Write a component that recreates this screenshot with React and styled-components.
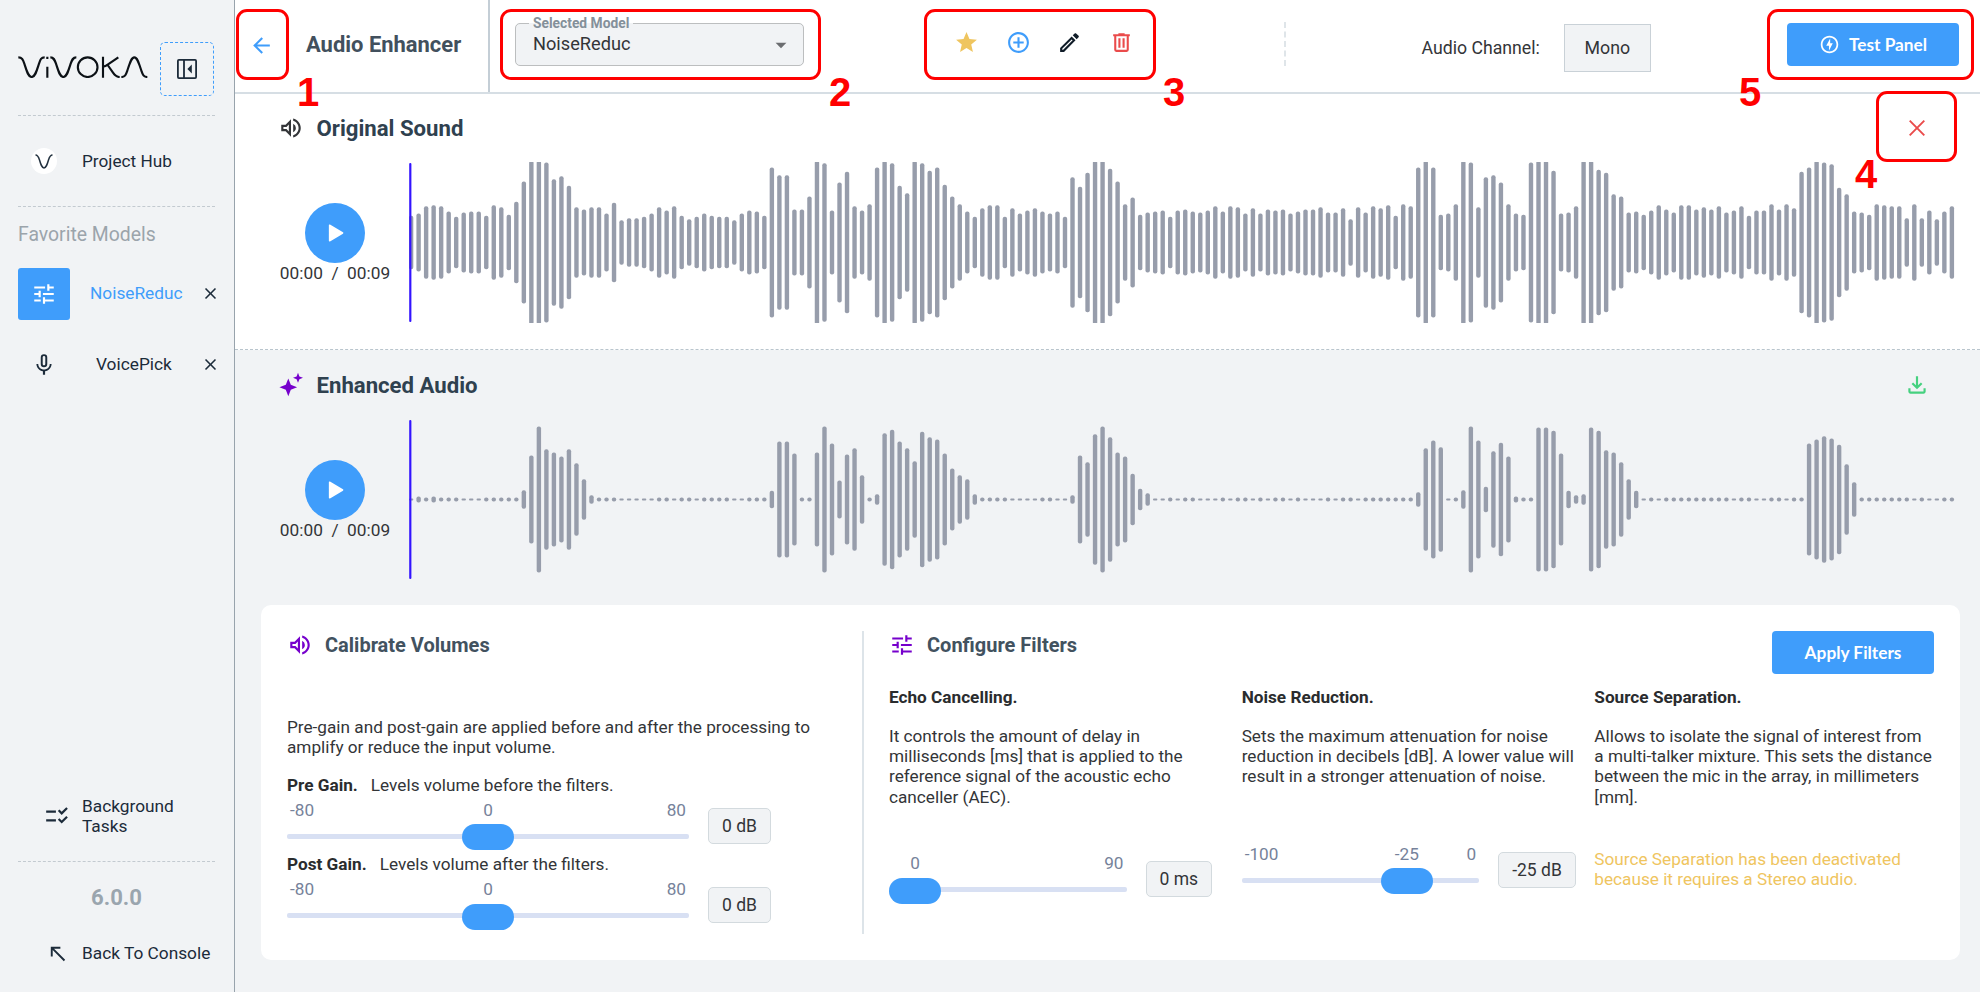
import React from "react";
import styled, { createGlobalStyle } from "styled-components";
import {
  MdAddCircleOutline,
  MdArrowBack,
  MdArrowDropDown,
  MdChecklistRtl,
  MdClose,
  MdNorthWest,
  MdOutlineEdit,
  MdOutlineFileDownload,
  MdOutlineOfflineBolt,
  MdOutlineVolumeUp,
  MdStar,
  MdTune,
} from "react-icons/md";

const palette = {
  blue: "#3f9dfb",
  grey: "#f1f3f5",
  line: "#d6dee4",
  dark: "#1c2b3a",
  title: "#374957",
  text: "#333538",
  muted: "#9aa5ae",
  label: "#76829a",
  purple: "#7600cc",
  wave: "#979dab",
  cursor: "#3414ff",
  yellow: "#efc55f",
  red: "#ea4b4b",
  green: "#45d17f",
  callout: "#ff0000",
};

const GlobalStyle = createGlobalStyle`
  * {
    box-sizing: border-box;
  }
  body {
    margin: 0;
    font-family: Roboto, "Liberation Sans", sans-serif;
    font-size: 17.19px;
    line-height: 20.3px;
    color: ${palette.text};
    background: ${palette.grey};
  }
  svg {
    display: block;
    flex-shrink: 0;
  }
`;

const Page = styled.div`
  position: relative;
  display: flex;
  width: 1980px;
  height: 992px;
  overflow: hidden;
`;

/* sidebar */

const Sidebar = styled.aside`
  display: flex;
  flex-direction: column;
  flex-shrink: 0;
  width: 235px;
  padding: 42px 19px 26px 18px;
  border-right: 1px solid #98a3ac;
  background: ${palette.grey};
  color: ${palette.dark};
`;

const LogoRow = styled.div`
  display: flex;
  align-items: center;
  justify-content: space-between;
  height: 54px;
  margin-bottom: 19px;

  > svg {
    margin-top: -5px;
  }
`;

const ToggleButton = styled.div`
  display: flex;
  align-items: center;
  justify-content: center;
  width: 54px;
  height: 54px;
  margin-right: 1px;
  border: 1px dashed ${palette.blue};
  border-radius: 5px;
`;

const Divider = styled.div`
  border-top: 1px dashed #c3cad0;
`;

const NavItem = styled.div`
  display: flex;
  align-items: center;
  height: ${(props) => props.$height}px;
  margin-bottom: ${(props) => props.$bottom || 0}px;
  padding-left: ${(props) => props.$indent}px;
  gap: ${(props) => props.$gap}px;
`;

const HubBadge = styled.div`
  display: flex;
  align-items: center;
  justify-content: center;
  width: 26px;
  height: 26px;
  border-radius: 50%;
  background: #fff;
`;

const FavoriteTitle = styled.div`
  margin: 16px 0 21.5px;
  font-size: 19.4px;
  line-height: 23px;
  color: #9ba4ab;
`;

const FavoriteRow = styled.div`
  display: flex;
  align-items: center;
  height: 52px;
  margin-bottom: 19px;
`;

const FavoriteIcon = styled.div`
  display: flex;
  align-items: center;
  justify-content: center;
  width: 52px;
  height: 52px;
  border-radius: 3px;
  color: ${(props) => (props.$active ? "#fff" : palette.dark)};
  background: ${(props) => (props.$active ? palette.blue : "transparent")};
`;

const FavoriteName = styled.div`
  flex: 1;
  padding-left: ${(props) => (props.$active ? 20 : 26)}px;
  font-size: 17.3px;
  color: ${(props) => (props.$active ? palette.blue : palette.dark)};
`;

const FavoriteClose = styled.div`
  margin-right: -5px;
`;

const SidebarBottom = styled.div`
  margin-top: auto;
  font-size: 17.3px;
`;

const Version = styled.div`
  margin: 22px 0 30px;
  font-size: 22.1px;
  font-weight: 700;
  line-height: 26px;
  text-align: center;
  color: ${palette.muted};
`;

/* header */

const Main = styled.main`
  display: flex;
  flex-direction: column;
  flex: 1;
  min-width: 0;
`;

const Header = styled.header`
  display: flex;
  height: 94px;
  border-bottom: 2px solid ${palette.line};
  background: #fff;
`;

const TitleBlock = styled.div`
  display: flex;
  align-items: center;
  width: 255px;
  padding: 0 0 2px 13.5px;
  border-right: 2px solid #c4ced6;
  color: ${palette.blue};
`;

const PageTitle = styled.h1`
  margin: 0 0 0 32.5px;
  font-size: 21.95px;
  font-weight: 700;
  line-height: 26px;
  color: #42505d;
`;

const ModelSelect = styled.fieldset`
  display: flex;
  align-items: center;
  justify-content: space-between;
  width: 289px;
  height: 50px;
  margin: 16px 0 0 25px;
  padding: 0 9px 6px 17px;
  border: 1px solid #bcbebf;
  border-radius: 5px;
  background: ${palette.grey};
  font-size: 18.2px;

  > svg {
    color: #6b6d70;
  }
`;

const ModelLegend = styled.legend`
  margin-left: -4px;
  padding: 0 4px;
  font-size: 13.8px;
  font-weight: 700;
  line-height: 14px;
  color: #84909a;
`;

const ActionBar = styled.div`
  display: flex;
  gap: 26.5px;
  margin: 29.5px 0 0 150px;
`;

const HeaderSeparator = styled.div`
  height: 44px;
  margin: 22px 0 0 150px;
  border-left: 2px dashed #dfe5e9;
`;

const ChannelLabel = styled.div`
  margin: 37.5px 0 0 136px;
  font-size: 17.7px;
`;

const ChannelValue = styled.div`
  width: 87px;
  height: 48px;
  margin: 24px 0 0 24px;
  border: 1px solid #c9d1d7;
  background: ${palette.grey};
  font-size: 17.8px;
  line-height: 46px;
  text-align: center;
`;

const Button = styled.button`
  display: flex;
  align-items: center;
  justify-content: center;
  gap: 9px;
  width: ${(props) => props.$width}px;
  height: 43px;
  padding: 0;
  border: 0;
  border-radius: 4px;
  background: ${palette.blue};
  font-family: Lato, sans-serif;
  font-size: 17.3px;
  font-weight: 700;
  color: #fff;
`;

const TestPanelSlot = styled.div`
  margin: 22.5px 21px 0 auto;
`;

/* audio sections */

const AudioSection = styled.section`
  display: flex;
  flex-direction: column;
  height: ${(props) => (props.$enhanced ? 230 : 256)}px;
  padding-top: ${(props) => (props.$enhanced ? 21.5 : 20.5)}px;
  border-bottom: ${(props) => (props.$enhanced ? "0" : "1px dashed #b9c5cd")};
  background: ${(props) => (props.$enhanced ? palette.grey : "#fff")};
`;

const SectionHead = styled.div`
  display: flex;
  align-items: center;
  height: 26px;
  margin-bottom: 21.5px;
  padding: 0 50.5px 0 43px;
`;

const SectionTitle = styled.h2`
  flex: 1;
  margin: 0 0 0 12.5px;
  font-size: 22.17px;
  font-weight: 700;
  line-height: 26px;
  color: #2f414f;
`;

const SectionBody = styled.div`
  display: flex;
`;

const Player = styled.div`
  display: flex;
  flex-direction: column;
  align-items: center;
  width: 174px;
  padding: 41px 0 0 26px;
`;

const PlayButton = styled.div`
  display: flex;
  align-items: center;
  justify-content: center;
  width: 60px;
  height: 60px;
  border-radius: 50%;
  background: ${palette.blue};
`;

const Time = styled.div`
  font-size: 17.3px;
  white-space: pre;
`;

/* settings card */

const Card = styled.section`
  display: flex;
  height: 355px;
  margin: 25px 20px 0 26px;
  padding: 26px 0;
  border-radius: 10px;
  background: #fff;
`;

const VolumePanel = styled.div`
  width: 603px;
  padding: 0 26px;
  border-right: 2px solid #dde4e9;
`;

const FilterPanel = styled.div`
  flex: 1;
  padding: 0 26px 0 25px;
`;

const PanelHead = styled.div`
  display: flex;
  align-items: flex-start;
  justify-content: space-between;
  height: 43px;
`;

const PanelTitle = styled.h3`
  display: flex;
  align-items: center;
  gap: 12px;
  height: 28px;
  margin: 0;
  font-size: 20px;
  font-weight: 700;
  color: #42525f;

  > svg {
    color: ${palette.purple};
  }
`;

const VolumeText = styled.p`
  margin: 42.7px 0 17.5px;
`;

const GainLabel = styled.div`
  display: flex;
  gap: 13px;
  margin-bottom: 4.7px;
`;

const Strong = styled.strong`
  font-weight: 700;
  color: #2a2c2e;
`;

const Gain = styled.div`
  height: 79.6px;
`;

const SliderRow = styled.div`
  display: flex;
  align-items: flex-start;
  gap: 19px;
  margin-top: ${(props) => props.$top || 0}px;
`;

const SliderBox = styled.div`
  width: ${(props) => props.$width}px;
`;

const Marks = styled.div`
  position: relative;
  display: flex;
  justify-content: space-between;
  height: 20px;
  margin-bottom: 4.5px;
  padding: 0 3px;
  color: ${palette.label};
`;

const CurrentMark = styled.span`
  position: absolute;
  transform: translateX(-50%);
`;

const Track = styled.div`
  position: relative;
  display: flex;
  align-items: center;
  height: 26px;

  &::before {
    content: "";
    width: 100%;
    height: 5px;
    margin-bottom: 2px;
    border-radius: 2px;
    background: #d8e0f3;
  }
`;

const Thumb = styled.div`
  position: absolute;
  width: 52px;
  height: 26px;
  border-radius: 13px;
  background: ${palette.blue};
  transform: translateX(-50%);
`;

const ValueBox = styled.div`
  height: 36px;
  margin-top: 8px;
  padding: 0 13px;
  border: 1px solid #d3dade;
  border-radius: 5px;
  background: ${palette.grey};
  font-size: 17.5px;
  line-height: 34px;
  white-space: nowrap;
`;

const Filters = styled.div`
  display: grid;
  grid-template-columns: repeat(3, 1fr);
  gap: 13px;
  margin-top: 13px;
`;

const FilterText = styled.p`
  min-height: 81.2px;
  margin: 18.4px 0 0;
`;

const Warning = styled.p`
  margin: 42px 0 0;
  color: ${palette.yellow};
`;

/* numbered callouts */

const CalloutFrame = styled.div`
  position: absolute;
  left: ${(props) => props.$x}px;
  top: ${(props) => props.$y}px;
  width: ${(props) => props.$w}px;
  height: 71px;
  border: 3px solid ${palette.callout};
  border-radius: 11px;
`;

const CalloutNumber = styled.div`
  position: absolute;
  left: ${(props) => props.$x}px;
  top: ${(props) => props.$y}px;
  font: 700 40px/40px "Liberation Sans", Arial, sans-serif;
  color: ${palette.callout};
`;

const callouts = [
  { n: 1, x: 236, y: 9, w: 53, nx: 297, ny: 72 },
  { n: 2, x: 500, y: 9, w: 321, nx: 829, ny: 72 },
  { n: 3, x: 924, y: 9, w: 232, nx: 1163, ny: 72 },
  { n: 4, x: 1876, y: 91, w: 81, nx: 1855, ny: 154 },
  { n: 5, x: 1767, y: 9, w: 207, nx: 1739, ny: 72 },
];

const FULL = 245;

const originalPeaks = [
  80, 87, 109, 112, 109, 93, 77, 90, 93, 93, 80, 112, 106, 83, 122, 183, FULL, FULL, 240, 190,
  199, 170, 106, 99, 106, 106, 87, 119, 67, 73, 73, 77, 87, 106, 96, 109, 80, 70, 77, 87,
  80, 77, 77, 67, 87, 96, 93, 80, 225, 202, 202, 99, 99, 138, FULL, 238, 96, 180, 212, 109,
  96, 115, 225, FULL, 238, 170, 148, FULL, 238, 215, 225, 173, 138, 115, 93, 77, 103, 112, 112, 77,
  103, 87, 96, 103, 93, 87, 93, 77, 196, 167, 209, FULL, FULL, 221, 183, 115, 135, 83, 90, 93,
  96, 77, 96, 99, 93, 90, 96, 109, 93, 109, 106, 87, 103, 87, 99, 96, 99, 87, 93, 99,
  99, 106, 90, 90, 103, 70, 106, 90, 109, 103, 112, 80, 115, 109, 225, FULL, 225, 83, 87, 115,
  FULL, 240, 106, 196, 202, 180, 115, 87, 83, 240, FULL, FULL, 215, 87, 90, 109, FULL, FULL, 218, 209,
  145, 138, 90, 93, 83, 96, 112, 99, 90, 112, 112, 99, 106, 99, 109, 90, 96, 109, 80, 96,
  96, 115, 99, 115, 103, 212, 225, FULL, 240, 235, 164, 145, 93, 90, 83, 115, 112, 109, 109, 73,
  115, 73, 96, 70, 93, 109,
];

const enhancedPeaks = [
  3, 9, 6, 9, 6, 6, 6, 3, 3, 3, 6, 6, 6, 6, 6, 28, 132, 219, 151, 141,
  129, 151, 109, 61, 13, 6, 6, 6, 3, 3, 3, 3, 3, 6, 6, 3, 6, 6, 3, 6,
  6, 6, 6, 3, 3, 6, 6, 6, 26, 174, 174, 138, 6, 6, 141, 219, 168, 57, 135, 154,
  73, 6, 16, 199, 209, 174, 154, 115, 203, 187, 180, 138, 93, 73, 61, 16, 6, 6, 6, 6,
  3, 3, 3, 3, 6, 6, 3, 3, 13, 132, 112, 196, 219, 187, 141, 129, 77, 32, 19, 3,
  3, 6, 3, 6, 6, 3, 3, 3, 6, 3, 6, 6, 3, 6, 3, 6, 6, 3, 6, 3,
  3, 3, 6, 3, 6, 6, 3, 6, 6, 6, 6, 6, 6, 6, 22, 154, 177, 157, 3, 6,
  28, 219, 177, 38, 145, 170, 129, 9, 6, 6, 216, 216, 206, 138, 26, 13, 16, 216, 206, 148,
  141, 112, 61, 26, 3, 6, 3, 6, 6, 6, 6, 6, 6, 6, 6, 6, 3, 6, 6, 3,
  3, 6, 6, 3, 6, 6, 168, 180, 190, 183, 164, 106, 52, 6, 6, 6, 6, 6, 6, 6,
  3, 6, 3, 3, 6, 6,
];

const BAR_STEP = 7.516;
const BAR_WIDTH = 4.4;

const Waveform = ({ peaks }) => (
  <svg width="1550" height="161" viewBox="0 0 1550 161">
    {peaks.map((peak, index) => (
      <rect
        key={index}
        x={2.1 + index * BAR_STEP - BAR_WIDTH / 2}
        y={80.5 - peak / 3}
        width={BAR_WIDTH}
        height={(peak * 2) / 3}
        rx={Math.min(2, peak / 3)}
        fill={palette.wave}
      />
    ))}
    <rect x="0.2" y="1" width="2.2" height="159" rx="1" fill={palette.cursor} />
  </svg>
);

const Logo = () => (
  <svg width="130" height="22" viewBox="53 166 390 66" fill="none" stroke="#0c1116" strokeWidth="6.4">
    <path d="M54 170C65 170 68 177 72 189C80 214 84 229 94 229C104 229 108 214 116 189C120 177 122 170 133 170" />
    <path d="M141 198V231M141 168V175" />
    <path d="M150 170C160 170 163 177 167 189C175 214 179 229 189 229C199 229 203 214 211 189C215 177 218 170 228 170" />
    <circle cx="262" cy="199.5" r="29.5" />
    <path d="M308 168V231M354 170L322 192C318 195 314 197 308 198M322 193L338 216C345 226 349 229 358 229" />
    <path d="M363 229C374 229 377 222 381 210C389 185 393 170 402 170C411 170 415 185 423 210C427 222 430 229 441 229" />
  </svg>
);

const HubIcon = () => (
  <svg width="18" height="15" viewBox="0 0 18 15" fill="none" stroke="#22313f" strokeWidth="1.5">
    <path d="M0.5 1C3 1 3.6 3 4.5 6C5.9 10.8 6.8 13.9 9 13.9S12.1 10.8 13.5 6C14.4 3 15 1 17.5 1" />
  </svg>
);

const CollapseIcon = () => (
  <svg width="20" height="20" viewBox="0 0 20 20" fill="none" stroke={palette.dark} strokeWidth="1.8">
    <rect x="0.9" y="0.9" width="18.2" height="18.2" rx="1" />
    <path d="M7 1V19" />
    <path d="M14.8 5.5V14.5L10.4 10Z" fill={palette.dark} stroke="none" />
  </svg>
);

const MicIcon = () => (
  <svg width="26" height="26" viewBox="0 0 24 24" fill="currentColor">
    <path d="M17.3,11C17.3,14 14.76,16.1 12,16.1C9.24,16.1 6.7,14 6.7,11H5C5,14.41 7.72,17.23 11,17.72V21H13V17.72C16.28,17.23 19,14.41 19,11M10.8,4.9C10.8,4.24 11.34,3.7 12,3.7C12.66,3.7 13.2,4.24 13.2,4.9L13.19,11.1C13.19,11.76 12.66,12.3 12,12.3C11.34,12.3 10.8,11.76 10.8,11.1M12,14A3,3 0 0,0 15,11V5A3,3 0 0,0 12,2A3,3 0 0,0 9,5V11A3,3 0 0,0 12,14Z" />
  </svg>
);

const TrashIcon = () => (
  <svg width="25" height="25" viewBox="0 0 24 24" fill={palette.red}>
    <path d="M9,3V4H4V6H5V19A2,2 0 0,0 7,21H17A2,2 0 0,0 19,19V6H20V4H15V3H9M7,6H17V19H7V6M9,8V17H11V8H9M13,8V17H15V8H13Z" />
  </svg>
);

const SparkleIcon = () => (
  <svg width="26" height="26" viewBox="0 0 26 26" fill={palette.purple}>
    <path d="M10.3 6.5L12.8 12.8L19.1 15.3L12.8 17.8L10.3 24.3L7.8 17.8L1.4 15.3L7.8 12.8Z" />
    <path d="M20 0.8L21.4 4.4L25 5.8L21.4 7.2L20 10.8L18.6 7.2L15 5.8L18.6 4.4Z" />
  </svg>
);

const PlayIcon = () => (
  <svg width="18" height="20" viewBox="0 0 18 20" fill="#fff" stroke="#fff" strokeWidth="1.5" strokeLinejoin="round">
    <path d="M3.6 2.2V17.8L16.6 10Z" />
  </svg>
);

const CloseIcon = () => (
  <svg width="26" height="26" viewBox="0 0 26 26" stroke={palette.red} strokeWidth="1.9">
    <path d="M5.7 5.7L20.3 20.3M20.3 5.7L5.7 20.3" />
  </svg>
);

const AudioTrack = ({ title, icon, action, peaks, enhanced }) => (
  <AudioSection $enhanced={enhanced}>
    <SectionHead>
      {icon}
      <SectionTitle>{title}</SectionTitle>
      {action}
    </SectionHead>
    <SectionBody>
      <Player>
        <PlayButton>
          <PlayIcon />
        </PlayButton>
        <Time>{"00:00  /  00:09"}</Time>
      </Player>
      <Waveform peaks={peaks} />
    </SectionBody>
  </AudioSection>
);

const Slider = ({ min, max, value, unit, width, top }) => {
  const ratio = (value - min) / (max - min);
  const center = 26 + ratio * (width - 52);
  return (
    <SliderRow $top={top}>
      <SliderBox $width={width}>
        <Marks>
          <span>{value !== min && min}</span>
          <CurrentMark style={{ left: center }}>{value}</CurrentMark>
          <span>{max}</span>
        </Marks>
        <Track>
          <Thumb style={{ left: center }} />
        </Track>
      </SliderBox>
      <ValueBox>
        {value} {unit}
      </ValueBox>
    </SliderRow>
  );
};

export default function App() {
  return (
    <Page>
      <GlobalStyle />
      <Sidebar>
        <LogoRow>
          <Logo />
          <ToggleButton>
            <CollapseIcon />
          </ToggleButton>
        </LogoRow>
        <Divider />
        <NavItem $height={90} $indent={13} $gap={25}>
          <HubBadge>
            <HubIcon />
          </HubBadge>
          Project Hub
        </NavItem>
        <Divider />
        <FavoriteTitle>Favorite Models</FavoriteTitle>
        <FavoriteRow>
          <FavoriteIcon $active>
            <MdTune size={26} />
          </FavoriteIcon>
          <FavoriteName $active>NoiseReduc</FavoriteName>
          <FavoriteClose>
            <MdClose size={19} />
          </FavoriteClose>
        </FavoriteRow>
        <FavoriteRow>
          <FavoriteIcon>
            <MicIcon />
          </FavoriteIcon>
          <FavoriteName>VoicePick</FavoriteName>
          <FavoriteClose>
            <MdClose size={19} />
          </FavoriteClose>
        </FavoriteRow>
        <SidebarBottom>
          <NavItem $height={40} $indent={26} $gap={12} $bottom={25}>
            <MdChecklistRtl size={26} />
            <span>
              Background
              <br />
              Tasks
            </span>
          </NavItem>
          <Divider />
          <Version>6.0.0</Version>
          <NavItem $height={26} $indent={27.5} $gap={13.5}>
            <MdNorthWest size={23} />
            Back To Console
          </NavItem>
        </SidebarBottom>
      </Sidebar>

      <Main>
        <Header>
          <TitleBlock>
            <MdArrowBack size={25} />
            <PageTitle>Audio Enhancer</PageTitle>
          </TitleBlock>
          <ModelSelect>
            <ModelLegend>Selected Model</ModelLegend>
            NoiseReduc
            <MdArrowDropDown size={26} />
          </ModelSelect>
          <ActionBar>
            <MdStar size={25} color={palette.yellow} />
            <MdAddCircleOutline size={25} color={palette.blue} />
            <MdOutlineEdit size={25} color="#101c28" />
            <TrashIcon />
          </ActionBar>
          <HeaderSeparator />
          <ChannelLabel>Audio Channel:</ChannelLabel>
          <ChannelValue>Mono</ChannelValue>
          <TestPanelSlot>
            <Button $width={172}>
              <MdOutlineOfflineBolt size={21} />
              Test Panel
            </Button>
          </TestPanelSlot>
        </Header>

        <AudioTrack
          title="Original Sound"
          icon={<MdOutlineVolumeUp size={26} />}
          action={<CloseIcon />}
          peaks={originalPeaks}
        />
        <AudioTrack
          enhanced
          title="Enhanced Audio"
          icon={<SparkleIcon />}
          action={<MdOutlineFileDownload size={26} color={palette.green} />}
          peaks={enhancedPeaks}
        />

        <Card>
          <VolumePanel>
            <PanelHead>
              <PanelTitle>
                <MdOutlineVolumeUp size={26} />
                Calibrate Volumes
              </PanelTitle>
            </PanelHead>
            <VolumeText>
              Pre-gain and post-gain are applied before and after the processing to amplify or reduce the input volume.
            </VolumeText>
            <Gain>
              <GainLabel>
                <Strong>Pre Gain.</Strong>
                Levels volume before the filters.
              </GainLabel>
              <Slider min={-80} max={80} value={0} unit="dB" width={402} />
            </Gain>
            <Gain>
              <GainLabel>
                <Strong>Post Gain.</Strong>
                Levels volume after the filters.
              </GainLabel>
              <Slider min={-80} max={80} value={0} unit="dB" width={402} />
            </Gain>
          </VolumePanel>

          <FilterPanel>
            <PanelHead>
              <PanelTitle>
                <MdTune size={26} />
                Configure Filters
              </PanelTitle>
              <Button $width={162}>Apply Filters</Button>
            </PanelHead>
            <Filters>
              <div>
                <Strong>Echo Cancelling.</Strong>
                <FilterText>
                  It controls the amount of delay in milliseconds [ms] that is applied to the reference signal of the
                  acoustic echo canceller (AEC).
                </FilterText>
                <Slider min={0} max={90} value={0} unit="ms" width={237.5} top={46.5} />
              </div>
              <div>
                <Strong>Noise Reduction.</Strong>
                <FilterText>
                  Sets the maximum attenuation for noise reduction in decibels [dB]. A lower value will result in a
                  stronger attenuation of noise.
                </FilterText>
                <Slider min={-100} max={0} value={-25} unit="dB" width={237.5} top={37} />
              </div>
              <div>
                <Strong>Source Separation.</Strong>
                <FilterText>
                  Allows to isolate the signal of interest from a multi-talker mixture. This sets the distance between
                  the mic in the array, in millimeters [mm].
                </FilterText>
                <Warning>Source Separation has been deactivated because it requires a Stereo audio.</Warning>
              </div>
            </Filters>
          </FilterPanel>
        </Card>
      </Main>

      {callouts.map((c) => (
        <React.Fragment key={c.n}>
          <CalloutFrame $x={c.x} $y={c.y} $w={c.w} />
          <CalloutNumber $x={c.nx} $y={c.ny}>
            {c.n}
          </CalloutNumber>
        </React.Fragment>
      ))}
    </Page>
  );
}
